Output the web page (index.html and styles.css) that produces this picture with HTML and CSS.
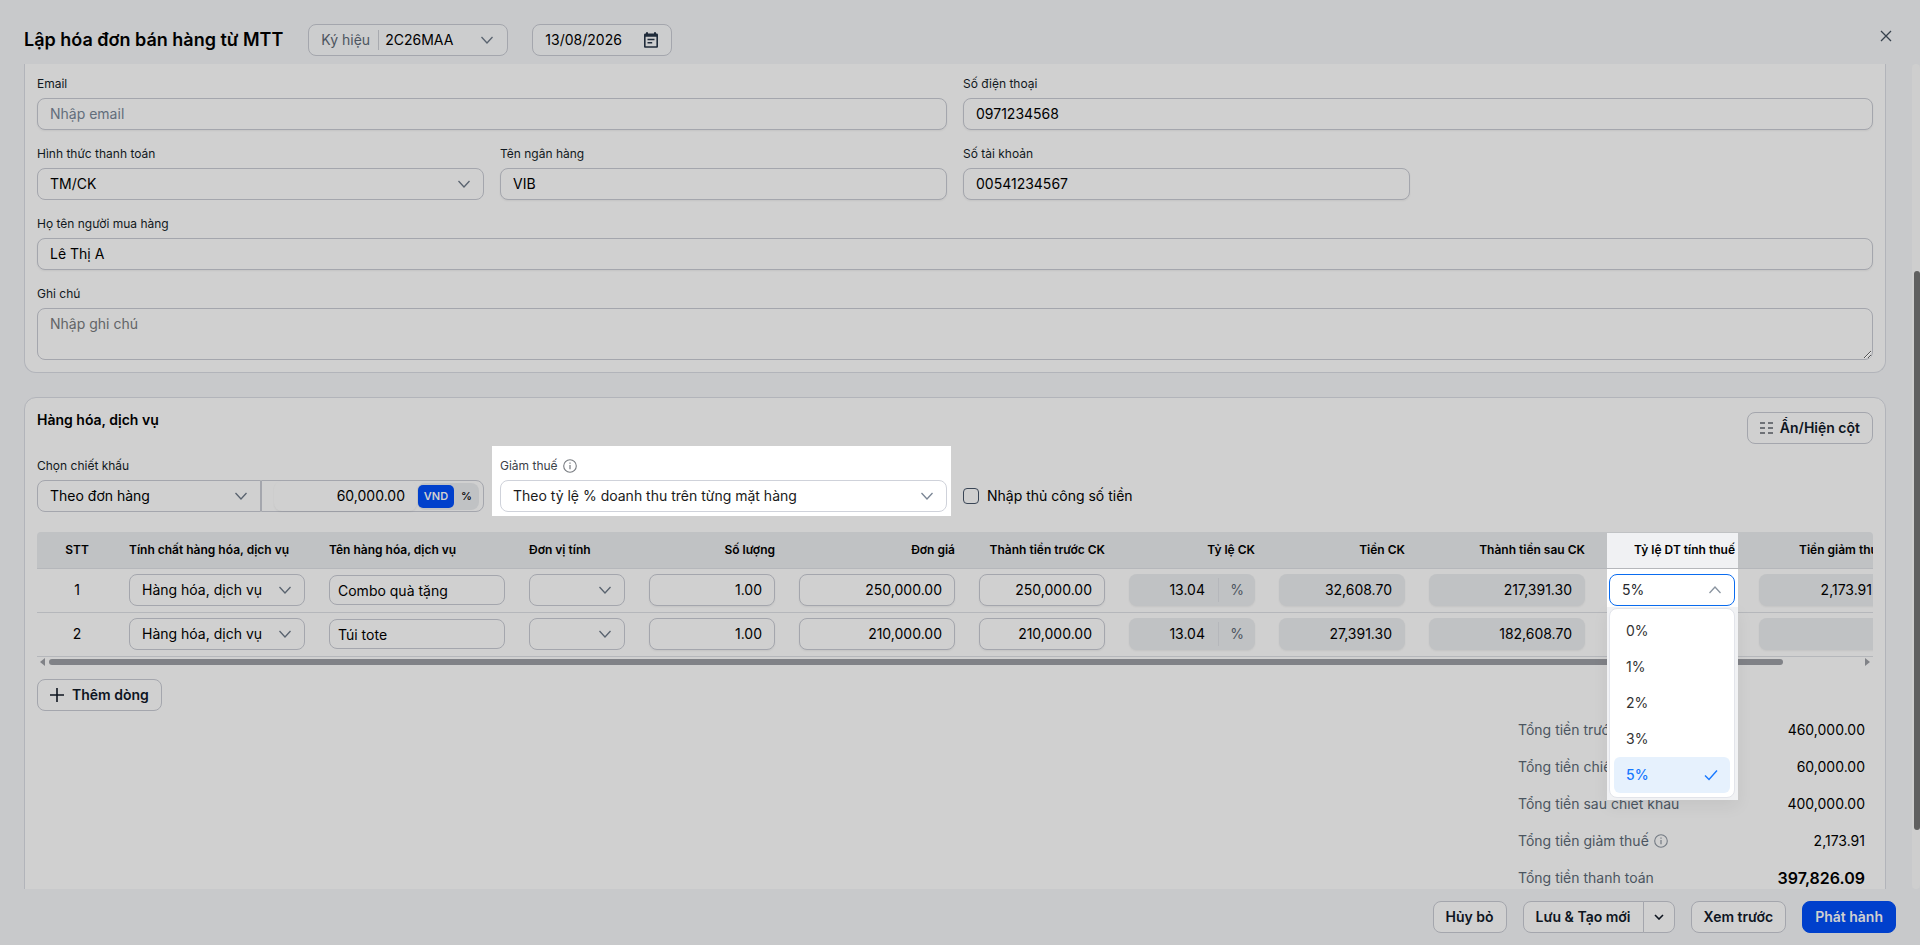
FILE: index.html
```html
<!DOCTYPE html>
<html lang="vi">
<head>
    <meta charset="UTF-8">
    <meta name="viewport" content="width=device-width, initial-scale=1.0">
    <title>Lập hóa đơn bán hàng từ MTT</title>
    <link rel="stylesheet" href="styles.css">
</head>
<body>

<svg class="sprite" aria-hidden="true">
    <symbol id="chevron" viewBox="0 0 14 14">
        <path d="M1.5 4 L7 10 L12.5 4" fill="none" stroke="currentColor" stroke-width="1.3"/>
    </symbol>
    <symbol id="info" viewBox="0 0 14 14">
        <circle cx="7" cy="7" r="6.3" fill="none" stroke="currentColor" stroke-width="1.1"/>
        <path d="M7 6 V10.2 M7 3.6 V4.8" stroke="currentColor" stroke-width="1.2"/>
    </symbol>
</svg>

<header class="header">
    <h1>Lập hóa đơn bán hàng từ MTT</h1>
    <div class="symbol-box">
        <label for="symbol">Ký hiệu</label>
        <div class="select">
            <select id="symbol"><option>2C26MAA</option></select>
            <svg><use href="#chevron"/></svg>
        </div>
    </div>
    <div class="date-box">
        <input type="text" id="date" value="13/08/2026" aria-label="Ngày lập">
        <svg viewBox="0 0 16 16">
            <path fill="#1f2b3a" fill-rule="evenodd" d="M3 1.6V.2h2v1.4h6V.2h2v1.4h.6c.9 0 1.4.6 1.4 1.4v11.4c0 .9-.6 1.4-1.4 1.4H2.4C1.5 15.8 1 15.2 1 14.4V3c0-.8.6-1.4 1.4-1.4zM2.6 4.8v9.4h10.8V4.8zM4.5 6.8h7v1.4h-7zM4.5 10h4.7v1.4H4.5z"/>
        </svg>
    </div>
    <button class="close-btn" aria-label="Đóng">
        <svg viewBox="0 0 12 12"><path d="M1 1 L11 11 M11 1 L1 11" stroke="currentColor" stroke-width="1.3"/></svg>
    </button>
</header>

<main class="main">
    <div class="content">
        <section class="card buyer">
            <div class="field span-2">
                <label for="email">Email</label>
                <input type="text" id="email" placeholder="Nhập email">
            </div>
            <div class="field span-2">
                <label for="phone">Số điện thoại</label>
                <input type="text" id="phone" value="0971234568">
            </div>
            <div class="field">
                <label for="payment">Hình thức thanh toán</label>
                <div class="select">
                    <select id="payment"><option>TM/CK</option></select>
                    <svg><use href="#chevron"/></svg>
                </div>
            </div>
            <div class="field">
                <label for="bank">Tên ngân hàng</label>
                <input type="text" id="bank" value="VIB">
            </div>
            <div class="field">
                <label for="account">Số tài khoản</label>
                <input type="text" id="account" value="00541234567">
            </div>
            <div class="field span-4">
                <label for="buyer-name">Họ tên người mua hàng</label>
                <input type="text" id="buyer-name" value="Lê Thị A">
            </div>
            <div class="field span-4">
                <label for="note">Ghi chú</label>
                <textarea id="note" placeholder="Nhập ghi chú"></textarea>
            </div>
        </section>

        <section class="card goods">
            <div class="goods-head">
                <h2>Hàng hóa, dịch vụ</h2>
                <button class="btn">
                    <svg class="columns-icon" viewBox="0 0 13 12"><path d="M0 1h5M8 1h5M0 6h5M8 6h5M0 11h5M8 11h5" stroke="currentColor" stroke-width="1.2"/></svg>
                    Ẩn/Hiện cột
                </button>
            </div>

            <div class="options">
                <div class="field">
                    <label for="discount">Chọn chiết khấu</label>
                    <div class="discount">
                        <div class="select">
                            <select id="discount"><option>Theo đơn hàng</option></select>
                            <svg><use href="#chevron"/></svg>
                        </div>
                        <div class="discount-value">
                            <input type="text" value="60,000.00" aria-label="Giá trị chiết khấu">
                            <div class="unit">
                                <button class="active">VND</button>
                                <button>%</button>
                            </div>
                        </div>
                    </div>
                </div>
                <div class="field spotlight">
                    <label for="tax">Giảm thuế <svg><use href="#info"/></svg></label>
                    <div class="select">
                        <select id="tax"><option>Theo tỷ lệ % doanh thu trên từng mặt hàng</option></select>
                        <svg><use href="#chevron"/></svg>
                    </div>
                </div>
                <div class="check">
                    <input type="checkbox" id="manual">
                    <label for="manual">Nhập thủ công số tiền</label>
                </div>
            </div>

            <div class="table-area">
                <div class="table-wrap">
                    <table>
                        <colgroup>
                            <col class="w80"><col class="w200"><col class="w200"><col class="w120">
                            <col class="w150"><col class="w180"><col class="w150"><col class="w150">
                            <col class="w150"><col class="w180"><col class="w150"><col class="w150">
                        </colgroup>
                        <thead>
                            <tr>
                                <th class="center">STT</th>
                                <th>Tính chất hàng hóa, dịch vụ</th>
                                <th>Tên hàng hóa, dịch vụ</th>
                                <th>Đơn vị tính</th>
                                <th class="num">Số lượng</th>
                                <th class="num">Đơn giá</th>
                                <th class="num">Thành tiền trước CK</th>
                                <th class="num">Tỷ lệ CK</th>
                                <th class="num">Tiền CK</th>
                                <th class="num">Thành tiền sau CK</th>
                                <th class="num lit">Tỷ lệ DT tính thuế</th>
                                <th class="num">Tiền giảm thuế</th>
                            </tr>
                        </thead>
                        <tbody>
                            <tr>
                                <td class="center">1</td>
                                <td><div class="select"><select aria-label="Tính chất"><option>Hàng hóa, dịch vụ</option></select><svg><use href="#chevron"/></svg></div></td>
                                <td><input type="text" class="name" value="Combo quà tặng" aria-label="Tên hàng"></td>
                                <td><div class="select"><select aria-label="Đơn vị tính"><option></option></select><svg><use href="#chevron"/></svg></div></td>
                                <td class="num"><input type="text" value="1.00" aria-label="Số lượng"></td>
                                <td class="num"><input type="text" value="250,000.00" aria-label="Đơn giá"></td>
                                <td class="num"><input type="text" value="250,000.00" aria-label="Thành tiền trước CK"></td>
                                <td class="num"><div class="rate"><input type="text" value="13.04" readonly aria-label="Tỷ lệ CK"><span>%</span></div></td>
                                <td class="num"><input type="text" value="32,608.70" readonly aria-label="Tiền CK"></td>
                                <td class="num"><input type="text" value="217,391.30" readonly aria-label="Thành tiền sau CK"></td>
                                <td class="lit"><div class="select open"><select aria-label="Tỷ lệ DT tính thuế"><option>5%</option></select><svg><use href="#chevron"/></svg></div></td>
                                <td class="num"><input type="text" value="2,173.91" readonly aria-label="Tiền giảm thuế"></td>
                            </tr>
                            <tr>
                                <td class="center">2</td>
                                <td><div class="select"><select aria-label="Tính chất"><option>Hàng hóa, dịch vụ</option></select><svg><use href="#chevron"/></svg></div></td>
                                <td><input type="text" class="name" value="Túi tote" aria-label="Tên hàng"></td>
                                <td><div class="select"><select aria-label="Đơn vị tính"><option></option></select><svg><use href="#chevron"/></svg></div></td>
                                <td class="num"><input type="text" value="1.00" aria-label="Số lượng"></td>
                                <td class="num"><input type="text" value="210,000.00" aria-label="Đơn giá"></td>
                                <td class="num"><input type="text" value="210,000.00" aria-label="Thành tiền trước CK"></td>
                                <td class="num"><div class="rate"><input type="text" value="13.04" readonly aria-label="Tỷ lệ CK"><span>%</span></div></td>
                                <td class="num"><input type="text" value="27,391.30" readonly aria-label="Tiền CK"></td>
                                <td class="num"><input type="text" value="182,608.70" readonly aria-label="Thành tiền sau CK"></td>
                                <td class="lit"></td>
                                <td class="num"><input type="text" readonly aria-label="Tiền giảm thuế"></td>
                            </tr>
                        </tbody>
                    </table>
                </div>
                <div class="h-scroll">
                    <svg viewBox="0 0 5 8"><path d="M5 0v8L0 4z" fill="currentColor"/></svg>
                    <div class="h-track"><div class="h-thumb"></div></div>
                    <svg viewBox="0 0 5 8"><path d="M0 0v8l5-4z" fill="currentColor"/></svg>
                </div>

                <!-- Danh sách tỷ lệ đang mở -->
                <div class="menu-spot">
                    <ul class="menu">
                        <li>0%</li>
                        <li>1%</li>
                        <li>2%</li>
                        <li>3%</li>
                        <li class="selected">5% <svg viewBox="0 0 14 12"><path d="M1 6.5 L5 10.5 L13 1.5" fill="none" stroke="currentColor" stroke-width="1.4"/></svg></li>
                    </ul>
                </div>
            </div>

            <button class="btn add-row">
                <svg class="plus-icon" viewBox="0 0 14 14"><path d="M7 0v14M0 7h14" stroke="currentColor" stroke-width="1.6"/></svg>
                Thêm dòng
            </button>

            <dl class="totals">
                <div><dt>Tổng tiền trước chiết khấu</dt><dd>460,000.00</dd></div>
                <div><dt>Tổng tiền chiết khấu</dt><dd>60,000.00</dd></div>
                <div><dt>Tổng tiền sau chiết khấu</dt><dd>400,000.00</dd></div>
                <div><dt>Tổng tiền giảm thuế <svg><use href="#info"/></svg></dt><dd>2,173.91</dd></div>
                <div><dt>Tổng tiền thanh toán</dt><dd class="grand">397,826.09</dd></div>
            </dl>
        </section>
    </div>
    <div class="v-scroll"><div class="v-thumb"></div></div>
</main>

<footer class="footer">
    <button class="btn">Hủy bỏ</button>
    <div class="split">
        <button class="btn">Lưu &amp; Tạo mới</button>
        <button class="btn" aria-label="Thêm lựa chọn">
            <svg class="caret" viewBox="0 0 10 6"><path d="M1 1 L5 5 L9 1" fill="none" stroke="currentColor" stroke-width="1.6"/></svg>
        </button>
    </div>
    <button class="btn">Xem trước</button>
    <button class="btn primary">Phát hành</button>
</footer>

</body>
</html>
```
FILE: styles.css
```css
* {
    box-sizing: border-box;
}

body {
    font-family: Inter, "Liberation Sans", sans-serif;
    font-size: 14px;
    line-height: 20px;
    margin: 0;
    height: 100vh;
    display: flex;
    flex-direction: column;
    overflow: hidden;
    background-color: #c8c9cb;
    color: #000;
}

.sprite {
    display: none;
}

input,
select,
textarea,
button {
    font: inherit;
    color: inherit;
}

input[type="text"],
select,
textarea {
    display: block;
    width: 100%;
    height: 32px;
    padding: 0 12px;
    border: 1px solid #a4a6ad;
    border-radius: 8px;
    background-color: #d0d0d0;
    box-shadow: 0 1px 2px rgba(0, 0, 0, 0.06);
    outline: none;
}

input[type="text"] {
    padding-bottom: 1px;
}

select {
    appearance: none;
    box-shadow: none;
}

input::placeholder {
    color: #626d7b;
}

textarea {
    height: 52px;
    padding: 5px 12px;
    box-shadow: none;
    resize: vertical;
}

textarea::placeholder {
    color: #626466;
}

.select {
    position: relative;
    flex: 1;
}

.select svg {
    position: absolute;
    right: 13px;
    top: 9px;
    width: 14px;
    height: 14px;
    color: #59636f;
    pointer-events: none;
}

/* Thanh tiêu đề */
.header {
    height: 64px;
    flex: none;
    display: flex;
    align-items: center;
    padding: 16px 28px 0 24px;
}

h1 {
    font-size: 18px;
    font-weight: 600;
    line-height: 24px;
    margin: 0 25px 0 0;
}

.symbol-box,
.date-box {
    display: flex;
    align-items: center;
    height: 32px;
    border: 1px solid #a4a6ad;
    border-radius: 8px;
    background-color: #cccdce;
}

.symbol-box {
    width: 200px;
    margin-right: 24px;
    padding-left: 12px;
}

.symbol-box label {
    padding-right: 8px;
    border-right: 1px solid #a8aaaf;
    color: #4d5560;
}

.symbol-box select {
    height: 30px;
    padding-left: 6px;
    border: none;
    background-color: transparent;
}

.symbol-box .select svg {
    top: 8px;
}

.date-box {
    width: 140px;
    padding-right: 12px;
}

.date-box input[type="text"] {
    border: none;
    height: 30px;
    padding-right: 0;
    background-color: transparent;
    box-shadow: none;
}

.date-box svg {
    flex: none;
    width: 16px;
    height: 16px;
}

.close-btn {
    align-self: flex-start;
    margin-left: auto;
    padding: 14px 0;
    border: none;
    background: none;
    color: #36404c;
    cursor: pointer;
}

.close-btn svg {
    display: block;
    width: 12px;
    height: 12px;
}

/* Nội dung */
.main {
    flex: 1;
    min-height: 0;
    display: flex;
}

.content {
    flex: 1;
    min-width: 0;
    overflow: hidden;
    padding: 0 26px 0 24px;
}

.v-scroll {
    width: 8px;
    flex: none;
    padding: 207px 0 0 2px;
    border-radius: 4px;
    background-color: #cecece;
}

.v-thumb {
    height: 559px;
    border-radius: 3px;
    background-color: #606060;
}

.card {
    border: 1px solid #b2b4ba;
    border-radius: 12px;
    padding: 12px;
    background-color: #d0d0d0;
}

.buyer {
    display: grid;
    grid-template-columns: repeat(4, 1fr);
    gap: 14px 16px;
    padding-top: 10px;
    border-top: none;
    border-radius: 0 0 12px 12px;
    margin-bottom: 24px;
}

.span-2 {
    grid-column: span 2;
}

.span-4 {
    grid-column: span 4;
}

.field label {
    display: flex;
    align-items: center;
    gap: 5px;
    margin-bottom: 4px;
    font-size: 12px;
    line-height: 20px;
    color: #111820;
}

.field label svg {
    width: 14px;
    height: 14px;
    color: #777b80;
}

.btn {
    display: inline-flex;
    align-items: center;
    justify-content: center;
    gap: 7px;
    height: 32px;
    padding: 0 12px;
    border: 1px solid #a4a6ad;
    border-radius: 8px;
    background-color: #d0d0d0;
    color: #0e151f;
    font-weight: 600;
    cursor: pointer;
}

.add-row {
    gap: 8px;
}

.goods {
    padding-top: 14px;
}

.goods-head {
    display: flex;
    justify-content: space-between;
    align-items: flex-start;
    margin-bottom: 12px;
}

h2 {
    margin: 0;
    font-size: 14px;
    font-weight: 600;
    line-height: 16px;
}

.columns-icon {
    width: 13px;
    height: 12px;
}

.plus-icon {
    width: 14px;
    height: 14px;
}

.options {
    display: grid;
    grid-template-columns: repeat(4, 1fr);
    gap: 16px;
    margin-bottom: 20px;
}

.discount {
    display: grid;
    grid-template-columns: 1fr 1fr;
}

.discount select {
    border-radius: 8px 0 0 8px;
}

.discount-value {
    display: flex;
    align-items: center;
    height: 32px;
    padding: 0 4px 0 12px;
    border: 1px solid #a4a6ad;
    border-radius: 0 8px 8px 0;
}

.discount-value input[type="text"] {
    flex: 1;
    width: 0;
    height: 30px;
    border: none;
    text-align: right;
}

.unit {
    display: flex;
    padding: 2px 0 2px 1px;
    border-radius: 8px;
    background-color: #c0c2c4;
}

.unit button {
    width: 25px;
    height: 23px;
    padding: 0;
    border: none;
    border-radius: 5px;
    background: none;
    font-size: 11px;
    font-weight: 500;
    line-height: 16px;
    cursor: pointer;
}

.unit .active {
    width: 36px;
    background-color: #0040cc;
    color: #d0d0d0;
    font-weight: 600;
}

/* Vùng được làm nổi bật */
.spotlight {
    position: relative;
    isolation: isolate;
}

.spotlight::before {
    content: "";
    position: absolute;
    inset: -10px -4px -4px -8px;
    background-color: #fff;
    z-index: -1;
}

.spotlight label {
    color: #3b4148;
}

.spotlight select {
    background-color: #fff;
    border-color: #cfd2da;
    color: #1a1a1a;
}

.spotlight .select svg {
    color: #7a8594;
}

.check {
    align-self: end;
    display: flex;
    align-items: center;
    gap: 8px;
    height: 32px;
}

.check input {
    appearance: none;
    width: 16px;
    height: 16px;
    margin: 0;
    border: 1px solid #3a4656;
    border-radius: 4px;
}

/* Bảng hàng hóa */
.table-area {
    position: relative;
    margin-bottom: 14px;
}

.table-wrap {
    overflow: hidden;
    border-radius: 4px 4px 0 0;
}

table {
    width: 1860px;
    table-layout: fixed;
    border-collapse: separate;
    border-spacing: 0;
}

.w80 { width: 80px; }
.w120 { width: 120px; }
.w150 { width: 150px; }
.w180 { width: 180px; }
.w200 { width: 200px; }

th,
td {
    padding: 0 12px;
    border-bottom: 1px solid #b5b7bb;
    text-align: left;
}

th {
    height: 37px;
    background-color: #c0c2c4;
    font-size: 12px;
    font-weight: 600;
    white-space: nowrap;
}

td {
    height: 44px;
    padding-bottom: 1px;
}

th.center,
td.center {
    text-align: center;
}

th.num,
td.num input {
    text-align: right;
}

td input.name {
    height: 30px;
    padding: 0 8px;
    box-shadow: none;
}

td input[readonly] {
    border-color: transparent;
    background-color: #c0c2c4;
}

.rate {
    display: flex;
    align-items: center;
    border-radius: 8px;
    background-color: #c0c2c4;
    box-shadow: 0 1px 2px rgba(0, 0, 0, 0.06);
}

.rate input[type="text"] {
    flex: 1;
    width: 0;
    background: none;
    box-shadow: none;
}

.rate span {
    width: 37px;
    line-height: 24px;
    border-left: 1px solid #b5b7bb;
    text-align: center;
    color: #4d5560;
}

.lit {
    position: relative;
    isolation: isolate;
}

.lit::before {
    content: "";
    position: absolute;
    inset: 0 9px 0 10px;
    background-color: #fff;
    z-index: -1;
}

th.lit::before {
    top: 1px;
    background-color: #f0f1f3;
}

.open select {
    border-color: #0a6cf0;
    background-color: #fff;
    color: #26282b;
}

.open svg {
    transform: rotate(180deg);
    color: #8a94a0;
}

.h-scroll {
    display: flex;
    align-items: center;
    gap: 4px;
    height: 6px;
    margin-top: 2px;
    padding: 0 3px;
    color: #808287;
}

.h-scroll svg {
    width: 5px;
    height: 8px;
}

.h-track {
    flex: 1;
}

.h-thumb {
    width: 1734px;
    max-width: 100%;
    height: 6px;
    border-radius: 3px;
    background-color: #808287;
}

.menu-spot {
    position: absolute;
    left: 1570px;
    top: 75px;
    padding: 1px 3px 2px 2px;
    background-color: #f1f2f4;
    box-shadow: 0 6px 16px rgba(0, 0, 0, 0.06);
}

.menu {
    width: 126px;
    margin: 0;
    padding: 4px;
    border: 1px solid #e2e4ea;
    border-radius: 8px;
    background-color: #fff;
    list-style: none;
    color: #333;
}

.menu li {
    display: flex;
    align-items: center;
    justify-content: space-between;
    height: 36px;
    padding: 0 12px;
    border-radius: 6px;
}

.menu .selected {
    background-color: #e6f1fd;
    color: #1677ff;
    font-weight: 500;
}

.menu svg {
    width: 14px;
    height: 12px;
}

/* Tổng tiền */
.totals {
    width: 347px;
    margin: 0 8px 0 auto;
}

.totals div {
    display: flex;
    justify-content: space-between;
    align-items: center;
    height: 37px;
}

.totals dt {
    display: flex;
    align-items: center;
    gap: 5px;
    color: #4b5560;
}

.totals dt svg {
    width: 14px;
    height: 14px;
    color: #737a83;
}

.totals dd {
    margin: 0;
}

.totals .grand {
    font-size: 16px;
    font-weight: 600;
}

/* Chân trang */
.footer {
    flex: none;
    display: flex;
    justify-content: flex-end;
    gap: 16px;
    padding: 12px 24px;
}

.split {
    display: flex;
}

.split .btn:first-child {
    border-radius: 8px 0 0 8px;
}

.split .btn:last-child {
    width: 32px;
    margin-left: -1px;
    padding: 0;
    border-radius: 0 8px 8px 0;
}

.caret {
    width: 10px;
    height: 6px;
}

.btn.primary {
    border-color: #0040cc;
    background-color: #0040cc;
    color: #d0d0d0;
}
```
